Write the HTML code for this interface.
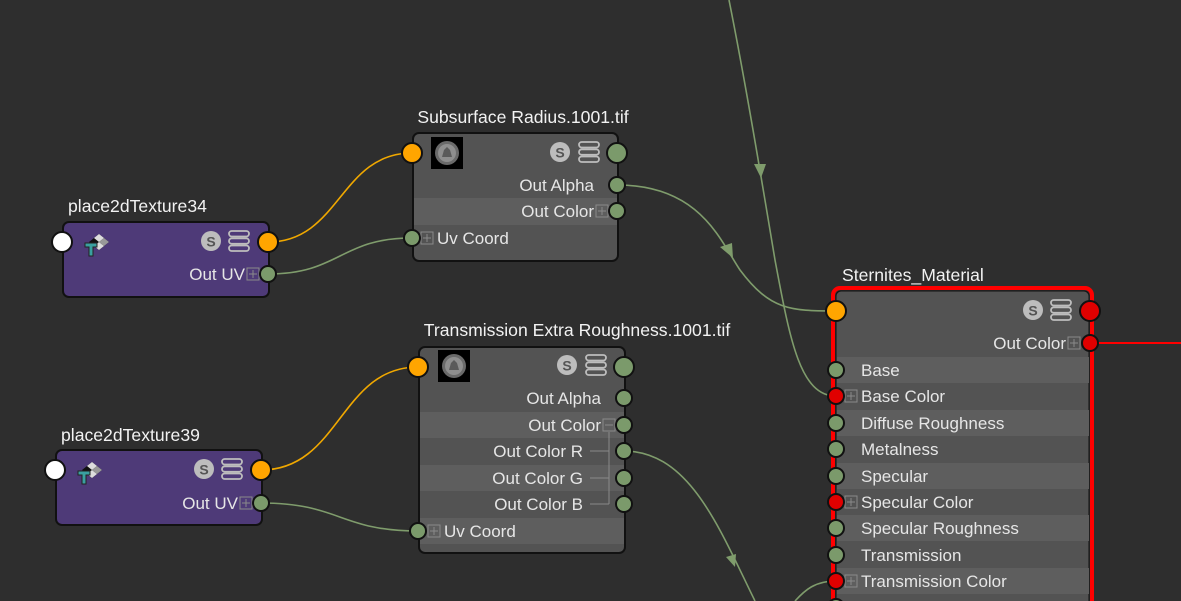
<!DOCTYPE html>
<html><head><meta charset="utf-8"><style>
html,body{margin:0;padding:0;background:#2e2e2e;overflow:hidden}
svg{display:block}
text{font-family:"Liberation Sans",sans-serif;font-size:17px;fill:#e6e6e6}
.t{font-size:17.6px;fill:#f2f2f2}
</style></head><body>
<svg width="1181" height="601" viewBox="0 0 1181 601" xmlns="http://www.w3.org/2000/svg">
<defs>
<g id="S"><circle r="10" fill="#bdbdbd"/><text x="0" y="5.5" text-anchor="middle" style="font-size:14px;font-weight:bold;fill:#555">S</text></g>
<g id="L" fill="none" stroke="#bdbdbd" stroke-width="1.8"><rect x="-10" y="-10" width="20" height="5.5" rx="2.7"/><rect x="-10" y="-2.7" width="20" height="5.5" rx="2.7"/><rect x="-10" y="4.5" width="20" height="5.5" rx="2.7"/></g>
<g id="P"><rect x="-6" y="-6" width="12" height="12" fill="none" stroke="#8a8a8a" stroke-width="1"/><path d="M-4 0H4M0 -4V4" stroke="#8a8a8a" stroke-width="1"/></g>
<g id="M"><rect x="-6" y="-6" width="12" height="12" fill="none" stroke="#8a8a8a" stroke-width="1"/><path d="M-4 0H4" stroke="#8a8a8a" stroke-width="1"/></g>
<g id="TX"><rect x="-16" y="-16" width="32" height="32" fill="#000"/><circle r="12" fill="#6a6a6a"/><circle r="9" fill="#8e8e8e"/><path d="M-5 4L-3 -3L0 -6L3 -3L5 4Z" fill="#5a5a5a"/></g>
<g id="PL"><path d="M0 -8L10 0L0 8L-10 0Z" fill="#111"/><path d="M0 -8L5 -4L0 0L-5 -4Z M0 0L5 4L0 8L-5 4Z" fill="#ddd"/><path d="M5 -4L10 0L5 4L0 0Z" fill="#999"/><path d="M-14 1H-2V5H-6V14H-10V5H-14Z" fill="#3aa0a0" stroke="#222" stroke-width="1"/></g>
</defs>
<g fill="none" stroke-width="1.6">
<path d="M268 242 C340 242 340 153 412 153" stroke="#f0a800"/>
<path d="M261 470 C340 470 340 367 418 367" stroke="#f0a800"/>
<path d="M268 274 C340 274 340 238 412 238" stroke="#7f9c6c"/>
<path d="M261 503 C340 503 340 531 418 531" stroke="#7f9c6c"/>
<path d="M617 185 C700 185 720 240 740 270 C770 310 790 311 836 311" stroke="#7f9c6c"/>
<path d="M729 0 C745 80 760 170 775 260 C790 340 800 396 836 396" stroke="#7f9c6c"/>
<path d="M624 451 C690 451 720 530 755 601" stroke="#7f9c6c"/>
<path d="M795 601 C805 590 815 581 836 581" stroke="#7f9c6c"/>
<path d="M1090 343H1181" stroke="#ff0000" stroke-width="2"/>
</g>
<g fill="#7f9c6c">
<path d="M754 164L766 164L761 178Z"/>
<path d="M720 247L732 243L733 258Z"/>
<path d="M726 557L736 554L735 567Z"/>
</g>
<text class="t" x="68" y="212">place2dTexture34</text>
<rect x="63" y="222" width="206" height="75" rx="6" fill="#4e3a78" stroke="#111" stroke-width="2"/>
<use href="#PL" x="99" y="242"/>
<use href="#S" x="211" y="241"/><use href="#L" x="239" y="241"/>
<text x="245" y="280" text-anchor="end">Out UV</text><use href="#P" x="253" y="274"/>
<text class="t" x="61" y="441">place2dTexture39</text>
<rect x="56" y="450" width="206" height="75" rx="6" fill="#4e3a78" stroke="#111" stroke-width="2"/>
<use href="#PL" x="92" y="470"/>
<use href="#S" x="204" y="469"/><use href="#L" x="232" y="469"/>
<text x="238" y="509" text-anchor="end">Out UV</text><use href="#P" x="246" y="503"/>
<text class="t" x="523" y="123" text-anchor="middle">Subsurface Radius.1001.tif</text>
<rect x="413" y="133" width="205" height="128" rx="6" fill="#535353" stroke="#111" stroke-width="2"/>
<rect x="414" y="198" width="203" height="27" fill="#5e5e5e"/>
<use href="#TX" x="447" y="153"/>
<use href="#S" x="560" y="152"/><use href="#L" x="589" y="152"/>
<text x="594" y="191" text-anchor="end">Out Alpha</text>
<text x="594" y="217" text-anchor="end">Out Color</text><use href="#P" x="602" y="211"/>
<use href="#P" x="427" y="238"/><text x="437" y="244">Uv Coord</text>
<text class="t" x="577" y="336" text-anchor="middle">Transmission Extra Roughness.1001.tif</text>
<rect x="419" y="347" width="206" height="206" rx="6" fill="#535353" stroke="#111" stroke-width="2"/>
<rect x="420" y="412" width="204" height="26" fill="#5e5e5e"/>
<rect x="420" y="465" width="204" height="26" fill="#5e5e5e"/>
<rect x="420" y="518" width="204" height="26" fill="#5e5e5e"/>
<use href="#TX" x="454" y="366"/>
<use href="#S" x="567" y="365"/><use href="#L" x="596" y="365"/>
<text x="601" y="404" text-anchor="end">Out Alpha</text>
<text x="601" y="431" text-anchor="end">Out Color</text><use href="#M" x="609" y="425"/>
<text x="583" y="457" text-anchor="end">Out Color R</text>
<text x="583" y="484" text-anchor="end">Out Color G</text>
<text x="583" y="510" text-anchor="end">Out Color B</text>
<path d="M609 432V504M590 451H609M590 478H609M590 504H609" stroke="#8a8a8a" fill="none"/>
<use href="#P" x="434" y="531"/><text x="444" y="537">Uv Coord</text>
<text class="t" x="842" y="281">Sternites_Material</text>
<rect x="833" y="288" width="259" height="330" rx="7" fill="none" stroke="#ff0000" stroke-width="4"/>
<rect x="836" y="291" width="253" height="330" rx="5" fill="#535353" stroke="#111" stroke-width="1"/>
<rect x="837" y="357" width="252" height="26" fill="#5e5e5e"/>
<rect x="837" y="410" width="252" height="26" fill="#5e5e5e"/>
<rect x="837" y="463" width="252" height="26" fill="#5e5e5e"/>
<rect x="837" y="515" width="252" height="26" fill="#5e5e5e"/>
<rect x="837" y="568" width="252" height="26" fill="#5e5e5e"/>
<use href="#S" x="1033" y="310"/><use href="#L" x="1061" y="310"/>
<text x="1066" y="349" text-anchor="end">Out Color</text><use href="#P" x="1074" y="343"/>
<text x="861" y="376">Base</text>
<use href="#P" x="851" y="396"/><text x="861" y="402">Base Color</text>
<text x="861" y="429">Diffuse Roughness</text>
<text x="861" y="455">Metalness</text>
<text x="861" y="482">Specular</text>
<use href="#P" x="851" y="502"/><text x="861" y="508">Specular Color</text>
<text x="861" y="534">Specular Roughness</text>
<text x="861" y="561">Transmission</text>
<use href="#P" x="851" y="581"/><text x="861" y="587">Transmission Color</text>
<g stroke="#111" stroke-width="2">
<circle cx="62" cy="242" r="10" fill="#fff"/><circle cx="268" cy="242" r="10" fill="#ffa500"/><circle cx="268" cy="274" r="8" fill="#7b9a6b"/>
<circle cx="55" cy="470" r="10" fill="#fff"/><circle cx="261" cy="470" r="10" fill="#ffa500"/><circle cx="261" cy="503" r="8" fill="#7b9a6b"/>
<circle cx="412" cy="153" r="10" fill="#ffa500"/><circle cx="617" cy="153" r="10" fill="#7b9a6b"/><circle cx="617" cy="185" r="8" fill="#7b9a6b"/><circle cx="617" cy="211" r="8" fill="#7b9a6b"/><circle cx="412" cy="238" r="8" fill="#7b9a6b"/>
<circle cx="418" cy="367" r="10" fill="#ffa500"/><circle cx="624" cy="367" r="10" fill="#7b9a6b"/>
<circle cx="624" cy="398" r="8" fill="#7b9a6b"/><circle cx="624" cy="425" r="8" fill="#7b9a6b"/><circle cx="624" cy="451" r="8" fill="#7b9a6b"/><circle cx="624" cy="478" r="8" fill="#7b9a6b"/><circle cx="624" cy="504" r="8" fill="#7b9a6b"/><circle cx="418" cy="531" r="8" fill="#7b9a6b"/>
<circle cx="836" cy="311" r="10" fill="#ffa500"/><circle cx="1090" cy="311" r="10" fill="#e00000"/><circle cx="1090" cy="343" r="8" fill="#e00000"/>
<circle cx="836" cy="370" r="8" fill="#7b9a6b"/><circle cx="836" cy="396" r="8" fill="#e00000"/><circle cx="836" cy="423" r="8" fill="#7b9a6b"/><circle cx="836" cy="449" r="8" fill="#7b9a6b"/><circle cx="836" cy="476" r="8" fill="#7b9a6b"/><circle cx="836" cy="502" r="8" fill="#e00000"/><circle cx="836" cy="528" r="8" fill="#7b9a6b"/><circle cx="836" cy="555" r="8" fill="#7b9a6b"/><circle cx="836" cy="581" r="8" fill="#e00000"/><circle cx="836" cy="607" r="8" fill="#7b9a6b"/>
</g>
</svg>
</body></html>
